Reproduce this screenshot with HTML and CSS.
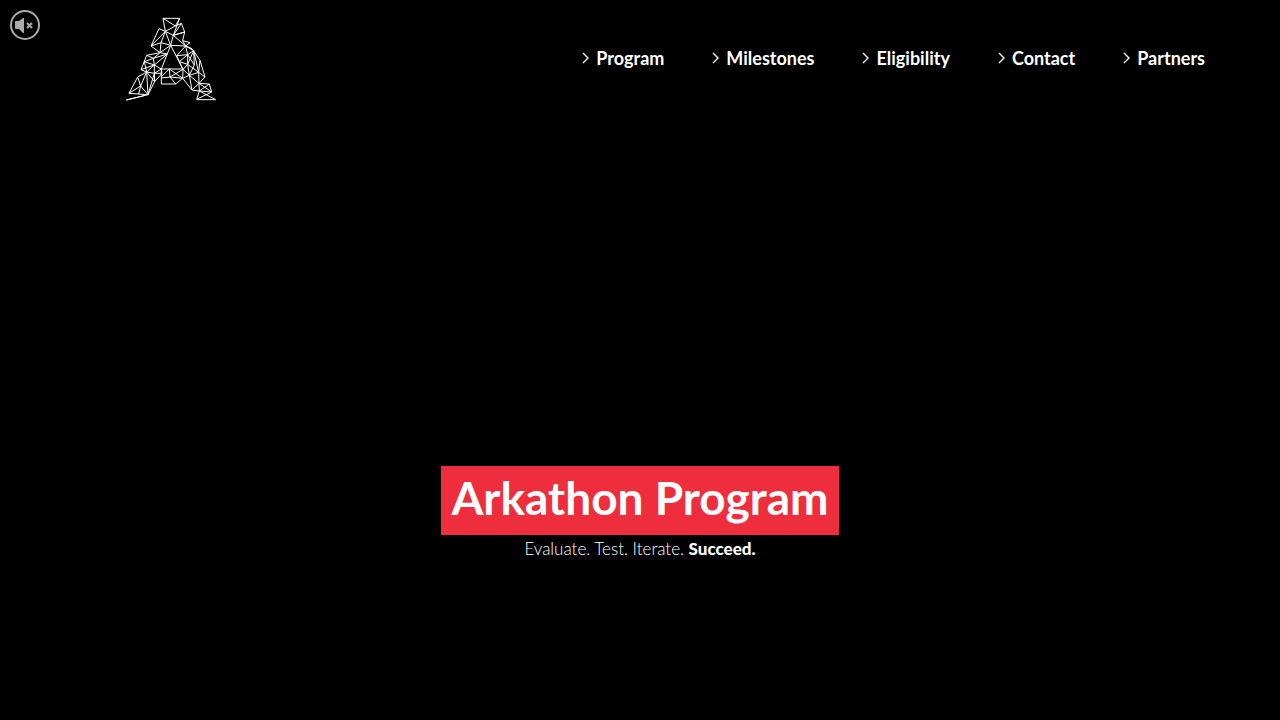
FILE: index.html
```html
<!DOCTYPE html>
<html lang="en">
<head>
<meta charset="utf-8">
<meta name="viewport" content="width=device-width, initial-scale=1">
<title>Arkathon Program</title>
<link rel="stylesheet" href="styles.css">
</head>
<body>
<button class="mute" type="button" aria-label="Unmute">
<svg viewBox="0 0 30 30" aria-hidden="true"><circle cx="15" cy="15" r="14"/><path class="speaker" d="M5 12q0-1 1-1h3l4-3h1v15h-1l-4-4H6q-1 0-1-1z"/><path class="cross" d="M17 13l5 5M22 13l-5 5"/></svg>
</button>
<header class="header">
<a class="logo" href="#" aria-label="Arkathon home">
<svg viewBox="15 21 276 255" aria-hidden="true">
<path d="M129 25H179L166 48L129 25L136 64L166 48L184 40L194 66L160 76L184 40M179 25L160 76M136 64L117 56L93 108L136 64L123 98L93 108L120 128L123 98L152 106L136 64M136 64L160 76L152 106L120 128M160 76L197 108L188 92L194 66L160 76M188 92L210 98L197 108L152 106"/>
<path d="M152 106L124 177M152 106L189 178M120 128L80 136L63 179L80 186L53 201L27 250L62 228L84 254L19 270L76 256M27 250L84 254L80 186L62 228L53 201M62 228L56 252M120 128L100 145L80 136M120 128L142 132L100 145L73 155L103 165L100 145M142 132L103 165M73 155L80 186L103 165L124 177L103 190L103 165M63 179L103 165M80 186L103 190L104 215L80 186M124 177L126 190L104 215L84 254L103 190L126 190"/>
<path d="M124 177H189L188 205L167 222H124V177M124 200L148 177L150 201L124 204M148 177L188 205L150 201L167 222M150 201L189 178"/>
<path d="M197 108L170 137L203 134L197 108L221 122L203 134L178 155L170 137M197 108L216 116L240 151L255 201L236 187L221 122L223 165L203 134L203 163L178 155M203 163L189 178L178 155M221 122L203 163L236 187L240 151M203 163L208 196L223 165M236 187L208 196L189 178M255 201L237 220L208 196L188 205L216 240L208 196M236 187L237 220L216 240"/>
<path d="M237 220L268 222L275 246L230 268L238 243L268 222M237 220L238 243L216 240M237 220L275 246L238 243L287 269H230"/>
</svg>
</a>
<nav class="nav" aria-label="Main">
<a href="#program"><svg viewBox="0 0 8 12" aria-hidden="true"><path d="M1 1l5 5-5 5"/></svg>Program</a>
<a href="#milestones"><svg viewBox="0 0 8 12" aria-hidden="true"><path d="M1 1l5 5-5 5"/></svg>Milestones</a>
<a href="#eligibility"><svg viewBox="0 0 8 12" aria-hidden="true"><path d="M1 1l5 5-5 5"/></svg>Eligibility</a>
<a href="#contact"><svg viewBox="0 0 8 12" aria-hidden="true"><path d="M1 1l5 5-5 5"/></svg>Contact</a>
<a href="#partners"><svg viewBox="0 0 8 12" aria-hidden="true"><path d="M1 1l5 5-5 5"/></svg>Partners</a>
</nav>
</header>
<main class="hero">
<h1>Arkathon Program</h1>
<p>Evaluate. Test. Iterate. <strong>Succeed.</strong></p>
</main>
</body>
</html>
```
FILE: styles.css
```css
* { box-sizing: border-box; }
body {
  margin: 0;
  min-height: 100vh;
  display: flex;
  flex-direction: column;
  background: #000;
  color: #fff;
  font-family: Lato, sans-serif;
}
svg { display: block; fill: none; stroke: currentColor; }
.mute {
  position: absolute;
  top: 10px;
  left: 10px;
  width: 30px;
  height: 30px;
  padding: 0;
  border: 0;
  background: none;
  color: #aaa;
  cursor: pointer;
}
.mute svg { width: 100%; stroke-width: 2; }
.mute .speaker { fill: currentColor; stroke: none; }
.header {
  display: flex;
  align-items: center;
  justify-content: space-between;
  padding: 17px 75px 0 125px;
}
.logo { color: #fff; }
.logo svg { width: 92px; height: 85px; stroke-width: 3; stroke-linejoin: round; }
.nav { display: flex; gap: 48px; padding-bottom: 4px; }
.nav a {
  display: flex;
  align-items: center;
  gap: 6px;
  color: #fff;
  font-size: 18px;
  font-weight: 700;
  line-height: 24px;
  text-decoration: none;
}
.nav svg { width: 8px; height: 12px; stroke-width: 1.4; }
.hero {
  flex: 1;
  display: flex;
  flex-direction: column;
  align-items: center;
  justify-content: flex-end;
  padding-bottom: 159px;
}
h1 {
  margin: 0;
  padding: 0 10px 6px;
  background: #ee2e3c;
  font-size: 46px;
  font-weight: 700;
  line-height: 63px;
}
p {
  margin: 2px 0 0;
  font-size: 17px;
  font-weight: 300;
  line-height: 24px;
}
strong { font-weight: 900; }
```
